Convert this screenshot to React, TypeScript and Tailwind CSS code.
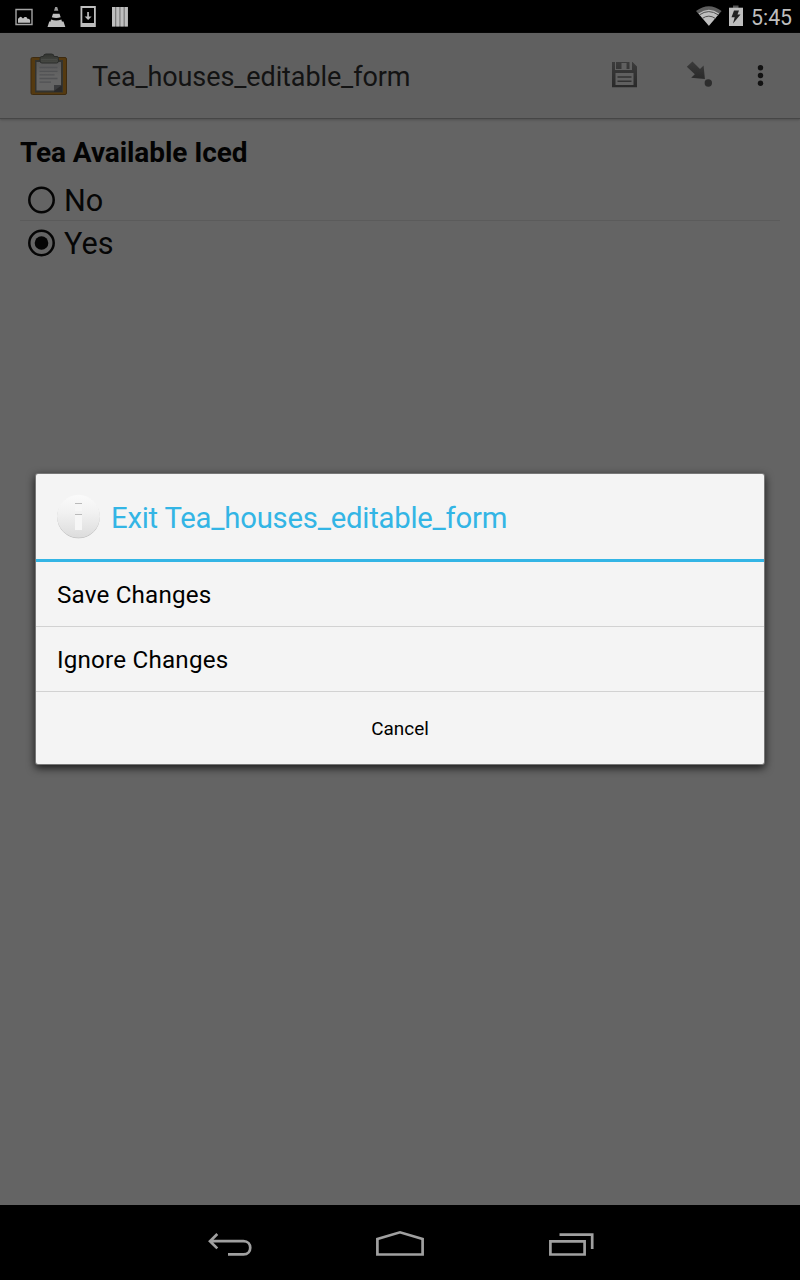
import React from "react";

function StatusBar() {
  return (
    <header className="flex h-[33px] shrink-0 items-center justify-between bg-black">
      <svg width="140" height="33" viewBox="0 0 140 33" fill="#bebebe">
        <path d="M16 9.500h16v15H16z" fill="none" stroke="#a4a4a4" strokeWidth="1.400" />
        <path d="M18 22.700v-4l2-1.800 1-.2 2 1.800 1.600-1.400h1.700l1.500 2 1-.4 1.300 1.200v2.800z" />
        <path d="M53 13.700h6.500l1.200 3.600q-4.500 1.600-8.900 0zM51 19.600q5.200 1.800 10.400 0l.5 1.800h1.600l1.800 5.600H47.500l1.800-5.600h1.300z" />
        <path d="M55.200 7h2l1.200 3.700h-4.400z" fill="#9a9a9a" />
        <path fillRule="evenodd" d="M80.500 6h15.300v21H80.500zM82.300 8v15h11.700V8z" />
        <path d="M87.200 12h1.700v4.500h2.700l-3.500 3.500-3.500-3.500h2.600z" />
        <path d="M112 7h15.800v19.500H112z" fill="#626262" />
        <path d="M112 7h3.300v19.500H112zM116.200 7h3.300v19.500h-3.300zM120.400 7h3.300v19.500h-3.300zM124.600 7h3.300v19.500h-3.300z" />
      </svg>
      <div className="flex items-center">
        <svg width="56" height="33" viewBox="694 0 56 33">
          <path d="M696 11q12.800-9.500 25.600 0L708.900 25.700z" fill="#5e5e5e" />
          <path d="M698.500 13.400q10.400-7.200 20.700 0L708.900 25.700z" fill="#c0c0c0" />
          <path d="M699.400 14.900q9.400-6.600 18.900 0M702.200 18.500q6.600-4.700 13.300 0" stroke="#505050" strokeWidth="1" fill="none" />
          <path d="M733 5.500h5.500V8H733z" fill="#555" />
          <path d="M729 7.700h14V26h-14z" fill="#bebebe" />
          <path d="M734 10.500h5l-1.500 4h3l-7.500 9 1.700-6.300h-3.200z" fill="#222" />
        </svg>
        <span className="mt-[3px] w-[50px] pl-px text-[21.300px] leading-[30px] text-[#bebebe]">5:45</span>
      </div>
    </header>
  );
}

function ClipboardIcon() {
  return (
    <svg width="40" height="44" viewBox="0 0 40 44">
      <defs>
        <linearGradient id="clip" x2="0" y2="1"><stop stopColor="#31332f" /><stop offset="1" stopColor="#484a45" /></linearGradient>
        <linearGradient id="paper" x2="0" y2="1"><stop stopColor="#595959" /><stop offset=".5" stopColor="#656565" /></linearGradient>
      </defs>
      <rect x="2" y="4.500" width="35.500" height="37" rx="1.500" fill="#553a10" stroke="#3e2b10" />
      <path d="M6 7h28v32.500H6z" fill="#33332f" />
      <path d="M7.500 9h24.500v28.500H7.500z" fill="url(#paper)" />
      <path d="M25 32h8v7h-8z" fill="#29292a" />
      <path d="M25 32h8l-8 6z" fill="#3b3c3e" />
      <path d="M10.500 14.500h18M10.500 18.300h18M10.500 21.900h15M10.500 25.500h18M10.500 29.200h11.500" stroke="#515254" strokeWidth="1.300" />
      <path d="M14.500 3.500q0-2.500 2.500-2.500h5.500q2.500 0 2.500 2.500h3q1.500 0 1.500 2v2.500q0 2-2 2H13q-2 0-2-2V5.500q0-2 1.500-2z" fill="url(#clip)" stroke="#2a2c2a" />
      <path d="M12 6.500h16" stroke="#484a46" />
    </svg>
  );
}

function ActionBar() {
  return (
    <div className="flex h-[86px] shrink-0 items-center border-b border-[#464646] bg-[#606060] pl-[29px] pr-[16px] shadow-[0_1px_2px_#505050]">
      <div className="mb-px"><ClipboardIcon /></div>
      <h1 className="ml-[23px] mt-[3px] whitespace-nowrap text-[27px] leading-[40px] tracking-[-0.110px] text-[#131313]">Tea_houses_editable_form</h1>
      <svg className="ml-auto" width="184" height="44" viewBox="600 54 184 44">
        <defs>
          <linearGradient id="ink" x2="0" y2="1"><stop stopColor="#3b3b3b" /><stop offset="1" stopColor="#292929" /></linearGradient>
        </defs>
        <path fill="url(#ink)" fillRule="evenodd" d="M612 62h3v8h17v-8h.5l4.500 4.500V87.300h-25zM616 62h13.500v7H616zM621.500 63v6h5v-6zM615.500 73v12h18V73z" />
        <path d="M622 63h4.500v5.500H622z" fill="#606060" opacity=".25" />
        <path d="M617.500 77h14M617.500 81.200h14" stroke="#323232" strokeWidth="1.500" />
        <path d="M692.500 61.500l7.500 7.500 3.600-3.500 1.300 13.500-13.700-1.200 3.600-3.500-8-7.500z" fill="url(#ink)" />
        <circle cx="708.300" cy="83" r="3.700" fill="#2d2d2d" />
        <g fill="#121212"><circle cx="760.500" cy="67.700" r="2.700" /><circle cx="760.500" cy="75.500" r="2.700" /><circle cx="760.500" cy="83.300" r="2.700" /></g>
      </svg>
    </div>
  );
}

function Choice({ label, checked }: { label: string; checked?: boolean }) {
  return (
    <label className="flex h-[43px] items-center pl-[7px]">
      <svg width="28" height="28" viewBox="0 0 28 28">
        <circle cx="14.500" cy="14" r="12.200" fill="none" stroke="#050505" strokeWidth="2.500" />
        {checked && <circle cx="14.500" cy="14" r="6.800" fill="#050505" />}
      </svg>
      <span className="ml-[9px] mt-[2px] text-[30.600px] leading-[42px] text-[#060606]">{label}</span>
    </label>
  );
}

function ExitDialog() {
  return (
    <section className="absolute left-[36px] top-[474px] flex h-[290px] w-[728px] flex-col rounded-[2px] bg-[#f4f4f4] shadow-[0_0_0_1px_#777,0_3px_8px_1px_rgba(0,0,0,0.75)]">
      <div className="flex h-[88px] shrink-0 items-center border-b-[3px] border-[#33b5e5] pl-[20px]">
        <svg width="45" height="45" viewBox="0 0 45 45">
          <defs>
            <linearGradient id="info" x2="0" y2="1"><stop stopColor="#fafafa" /><stop offset=".4" stopColor="#f2f2f2" /><stop offset="1" stopColor="#dcdcdc" /></linearGradient>
          </defs>
          <circle cx="22.500" cy="23" r="21.300" fill="#b4b4b4" />
          <circle cx="22.500" cy="22.300" r="21.500" fill="url(#info)" />
          <path d="M19 9h7v8h-7zM19 20h7v16h-7z" fill="#f6f6f6" />
          <path d="M19 9.500h7M19 20.500h7" stroke="#bababa" />
        </svg>
        <h2 className="ml-[10px] mt-[2px] whitespace-nowrap text-[29.300px] leading-[40px] tracking-[-0.230px] text-[#33b5e5]">Exit Tea_houses_editable_form</h2>
      </div>
      <button className="h-[65px] shrink-0 border-b border-[#d2d2d2] pl-[21px] pt-[2px] text-left text-[24.200px] tracking-[0.180px] text-black">Save Changes</button>
      <button className="h-[65px] shrink-0 border-b border-[#d2d2d2] pl-[21px] pt-[2px] text-left text-[24.200px] tracking-[0.200px] text-black">Ignore Changes</button>
      <button className="flex-1 pt-[2px] text-[18.900px] text-black">Cancel</button>
    </section>
  );
}

function NavigationBar() {
  return (
    <nav className="flex h-[75px] shrink-0 items-center justify-center bg-black">
      <svg width="400" height="75" viewBox="200 1205 400 75" fill="none" stroke="#a0a0a0" strokeWidth="2.700">
        <path d="M217.300 1234l-7.300 7.200 7.300 7.200M211 1241.200h32.500c9 0 9 13.200 0 13.200H228" />
        <path d="M377.400 1254.500v-15.500L400 1232.300l22.600 6.700v15.500z" />
        <path d="M550.400 1241.300h34.200v13.200h-34.200zM559.500 1234.700h32.700v14.300" />
      </svg>
    </nav>
  );
}

export default function App() {
  return (
    <div className="relative flex h-[1280px] w-[800px] flex-col overflow-hidden bg-[#646464] font-[Roboto,sans-serif]">
      <StatusBar />
      <ActionBar />
      <main className="flex-1 px-[20px] pt-[16px]">
        <h2 className="h-[42px] whitespace-nowrap text-[28px] font-bold leading-[36px] tracking-[-0.080px] text-[#030303]">Tea Available Iced</h2>
        <div className="h-[44px] border-b border-[#5b5b5b] pt-px"><Choice label="No" /></div>
        <Choice label="Yes" checked />
      </main>
      <NavigationBar />
      <ExitDialog />
    </div>
  );
}
